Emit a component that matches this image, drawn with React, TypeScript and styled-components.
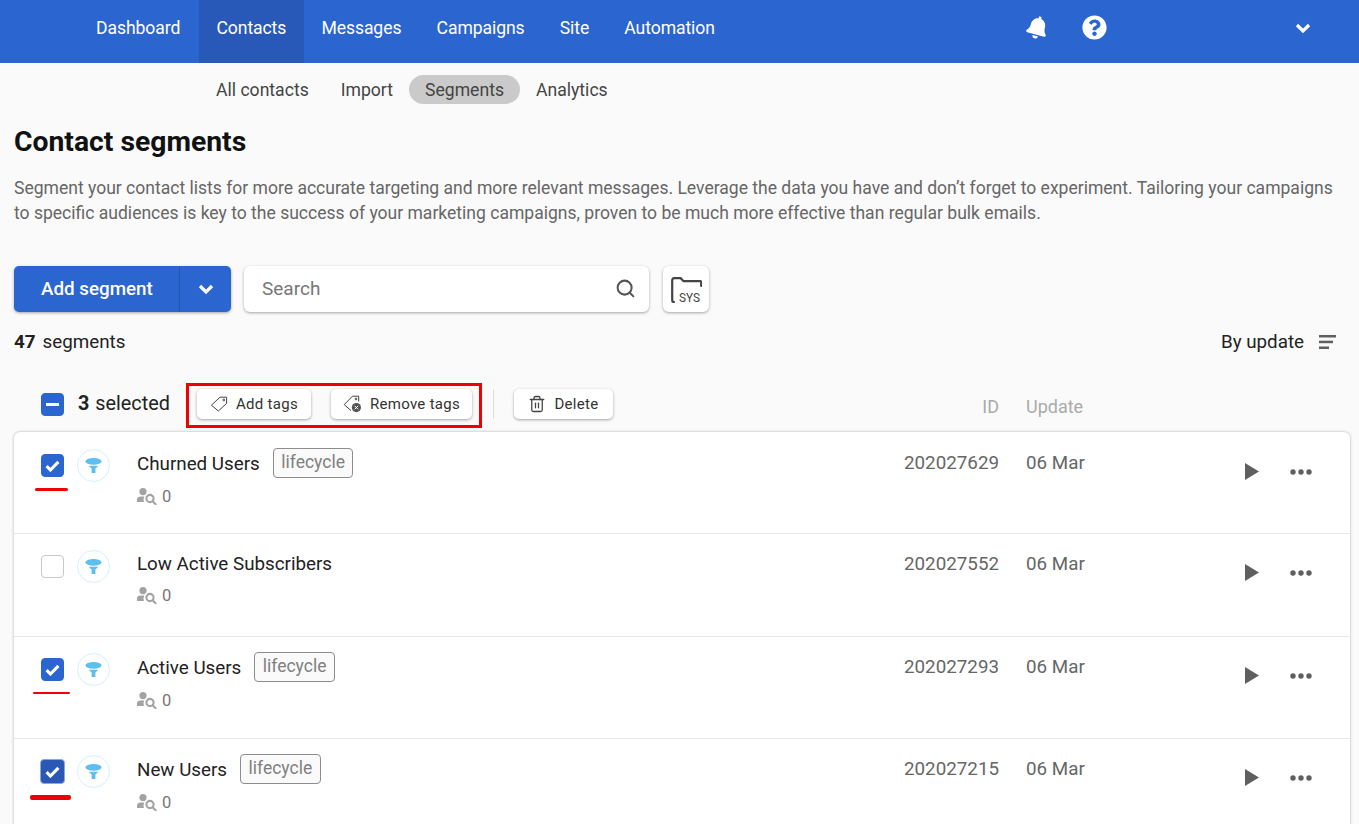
import React from 'react';
import styled, { createGlobalStyle } from 'styled-components';
import { FaBell, FaQuestionCircle } from 'react-icons/fa';
import { Search as SearchIcon, Trash2 } from 'lucide-react';

const GlobalStyle = createGlobalStyle`
  html, body {
    margin: 0;
    height: 100%;
    overflow: hidden;
    background: #fafafa;
    font-family: Roboto, "Liberation Sans", sans-serif;
  }
  * { box-sizing: border-box; }
`;

const TopNav = styled.nav`
  height: 63px;
  background: #2b65cf;
  display: flex;
  align-items: stretch;
  padding-left: 78.5px;
`;

const NavItem = styled.a<{ $active?: boolean }>`
  display: flex;
  align-items: center;
  padding: 0 17.6px 8px;
  height: 63px;
  color: #fff;
  font-size: 17.6px;
  letter-spacing: -0.1px;
  background: ${(p) => (p.$active ? '#2959b8' : 'transparent')};

  &:first-child {
    margin-right: 1px;
  }
`;

const NavIcons = styled.div`
  display: flex;
  align-items: center;
  padding-bottom: 8px;
  color: #fff;
  margin-left: 294px;
  gap: 33px;
`;

const BellIcon = styled(FaBell)`
  font-size: 23px;
  transform: rotate(15deg);
`;

const NavChevron = styled.div`
  display: flex;
  align-items: center;
  padding-bottom: 7px;
  margin-left: 188px;
`;

const SubNav = styled.div`
  display: flex;
  align-items: center;
  margin-top: 12px;
  padding-left: 200px;
  height: 29px;
`;

const SubItem = styled.a<{ $active?: boolean }>`
  padding: 0 16px;
  height: 29px;
  line-height: 31px;
  border-radius: 15px;
  font-size: 17.6px;
  color: #444;
  background: ${(p) => (p.$active ? '#cacaca' : 'transparent')};
`;

const Page = styled.main`
  padding: 0 9px 0 14px;
`;

const Title = styled.h1`
  margin: 22px 0 0;
  font-size: 28.3px;
  line-height: 32px;
  font-weight: 700;
  color: #111;
`;

const Description = styled.p`
  margin: 18px 0 0;
  font-size: 17.55px;
  line-height: 25px;
  color: #666;
  width: 1330px;
`;

const Toolbar = styled.div`
  display: flex;
  margin-top: 40px;
  height: 46px;
`;

const AddButton = styled.div`
  width: 217px;
  height: 46px;
  display: flex;
  border-radius: 5px;
  background: #2b65cf;
  color: #fff;
  box-shadow: 0 1px 3px rgba(0, 0, 0, 0.35);
`;

const AddLabel = styled.span`
  width: 166px;
  padding-left: 27px;
  line-height: 46px;
  font-size: 18.8px;
  font-weight: 500;
  border-right: 1px solid #2455ad;
`;

const AddCaret = styled.span`
  flex: 1;
  display: flex;
  align-items: center;
  justify-content: center;
`;

const SearchBox = styled.div`
  width: 405px;
  height: 46px;
  margin-left: 13px;
  display: flex;
  align-items: center;
  justify-content: space-between;
  padding: 0 13px 2px 18px;
  background: #fff;
  border-radius: 6px;
  box-shadow: 0 1px 3px rgba(0, 0, 0, 0.35);
  font-size: 19px;
  color: #777;
`;

const FolderButton = styled.div`
  width: 46px;
  height: 46px;
  margin-left: 14px;
  padding-top: 3px;
  display: flex;
  align-items: center;
  justify-content: center;
  background: #fff;
  border-radius: 6px;
  box-shadow: 0 1px 3px rgba(0, 0, 0, 0.35);
`;

const CountRow = styled.div`
  display: flex;
  align-items: center;
  justify-content: space-between;
  margin-top: 18px;
  height: 24px;
  padding-right: 14px;
  font-size: 18.8px;
  color: #222;
`;

const Count = styled.b`
  font-weight: 700;
  margin-right: 7px;
`;

const SortLabel = styled.div`
  display: flex;
  align-items: center;
  gap: 15px;
`;

const BulkBar = styled.div`
  display: flex;
  align-items: center;
  margin-top: 29px;
  height: 45px;
  padding-left: 27px;
`;

const SelectedText = styled.span`
  margin-left: 14px;
  width: 108px;
  font-size: 19.8px;
  color: #222;
  padding-bottom: 5px;
  b { font-weight: 700; margin-right: 6px; }
`;

const Marked = styled.div`
  display: flex;
  align-items: center;
  gap: 20px;
  height: 45px;
  padding: 0 7px 3px 8px;
  border: 3px solid #f00000;
`;

const BulkButton = styled.button<{ $w: number }>`
  display: flex;
  align-items: center;
  justify-content: center;
  gap: 8px;
  height: 30px;
  width: ${(p) => p.$w}px;
  padding: 0;
  border: 0;
  border-radius: 5px;
  background: #fff;
  box-shadow: 0 1px 3px rgba(0, 0, 0, 0.35);
  font-family: inherit;
  font-size: 15px;
  letter-spacing: 0.3px;
  color: #333;
`;

const BulkDivider = styled.span`
  width: 1px;
  height: 30px;
  margin: 0 20px 3px 11px;
  background: #ddd;
`;

const DeleteWrap = styled.div`
  padding-bottom: 3px;
`;

const HeadColumns = styled.div`
  display: flex;
  margin-left: auto;
  font-size: 18px;
  color: #aaa;
  padding-top: 2px;
`;

const HeadUpdate = styled.span`
  width: 324px;
  margin-left: 27px;
`;

const Card = styled.section`
  margin-top: 4px;
  padding-top: 1px;
  background: #fff;
  border-radius: 6px 6px 0 0;
  box-shadow: 0 0 3px rgba(0, 0, 0, 0.3);
`;

const Row = styled.div<{ $h: number }>`
  height: ${(p) => p.$h}px;
  display: flex;
  align-items: flex-start;
  padding: 15px 38px 0 27px;
  border-bottom: 1px solid #e6e6e6;
`;

const CheckCell = styled.div`
  position: relative;
  width: 23px;
  height: 33px;
  margin-top: 1px;
  display: flex;
  align-items: center;
  justify-content: center;
  flex: none;
`;

const Box = styled.span<{ $on?: boolean; $hover?: boolean }>`
  flex: none;
  width: ${(p) => (p.$hover ? 25 : 23)}px;
  height: ${(p) => (p.$hover ? 25 : 23)}px;
  border-radius: 4px;
  display: flex;
  align-items: center;
  justify-content: center;
  background: ${(p) => (p.$hover ? '#2a58b4' : p.$on ? '#2b65cf' : '#fff')};
  border: 1px solid ${(p) => (p.$hover ? '#8aa8e4' : p.$on ? '#2b65cf' : '#c9c9c9')};
`;

const BulkBox = styled(Box)`
  margin-bottom: 3px;
`;

const RedLine = styled.span<{ $left: number; $w: number; $h: number; $top: number }>`
  position: absolute;
  left: ${(p) => p.$left}px;
  top: ${(p) => p.$top}px;
  width: ${(p) => p.$w}px;
  height: ${(p) => p.$h}px;
  border-radius: 2px;
  background: #f00000;
`;

const FunnelCircle = styled.div`
  flex: none;
  width: 33px;
  height: 33px;
  margin: 1px 0 0 13px;
  border-radius: 50%;
  border: 1px solid #d4f0fd;
  background: #fff;
  display: flex;
  align-items: center;
  justify-content: center;
`;

const Main = styled.div`
  flex: 1;
  margin-left: 27px;
`;

const NameLine = styled.div`
  display: flex;
  align-items: center;
  gap: 13px;
  min-height: 28px;
`;

const Name = styled.span`
  font-size: 18.8px;
  color: #222;
  padding-top: 2px;
`;

const TagChip = styled.span`
  height: 30px;
  padding: 0 7.5px;
  line-height: 26px;
  border: 1px solid #8d8d8d;
  border-radius: 4px;
  background: #fafafa;
  font-size: 17.5px;
  color: #808080;
`;

const Audience = styled.div`
  display: flex;
  align-items: center;
  gap: 5px;
  margin-top: 7px;
  height: 22px;
  font-size: 16.5px;
  color: #777;
`;

const IdCell = styled.div`
  font-size: 18.8px;
  color: #666;
  padding-top: 4px;
`;

const DateCell = styled.div`
  width: 219px;
  margin-left: 27px;
  font-size: 18.8px;
  color: #666;
  padding-top: 4px;
`;

const Actions = styled.div`
  display: flex;
  align-items: center;
  gap: 31px;
  height: 44px;
  margin-top: 1px;
`;

const DotsWrap = styled.span`
  display: flex;
  margin-top: 2px;
`;

const Chevron = () => (
  <svg width="16" height="11" viewBox="0 0 16 11">
    <path d="M2 2l6 6 6-6" fill="none" stroke="#fff" strokeWidth="3.2" />
  </svg>
);

const Funnel = () => (
  <svg width="17" height="15" viewBox="0 0 17 15">
    <ellipse cx="8.5" cy="3.4" rx="8" ry="3.3" fill="#5bc0f0" />
    <path d="M3.6 7.8h9.8l-3 2.6V15H6.6v-4.6z" fill="#5bc0f0" />
  </svg>
);

const UserSearch = () => (
  <svg width="20" height="17" viewBox="0 0 20 17" fill="#a3a3a3">
    <circle cx="6" cy="3.6" r="3.6" />
    <path d="M0 14v-2.6C0 9.6 1.6 8.4 3.6 8.4h3.8a6 6 0 0 0-.5 5.6z" />
    <circle cx="13" cy="10.5" r="3.6" fill="none" stroke="#a3a3a3" strokeWidth="2.1" />
    <path d="M15.6 13.2l3 3" stroke="#a3a3a3" strokeWidth="2.1" strokeLinecap="round" />
  </svg>
);

const TagOutline = () => (
  <svg width="18" height="16" viewBox="0 0 18 16" fill="none" stroke="#444" strokeWidth="1">
    <path d="M10 1.2h6.6v6.2L8.4 15 1.4 9.2z" strokeLinejoin="round" />
    <circle cx="13.8" cy="4" r="0.9" />
  </svg>
);

const TagRemove = () => (
  <svg width="19" height="18" viewBox="0 0 19 18" fill="none" stroke="#444" strokeWidth="1">
    <path d="M9.5 1.2h6.2v5.4M8 15.6L1.2 9.6 9.5 1.2" strokeLinejoin="round" />
    <circle cx="13" cy="4" r="0.9" />
    <circle cx="13.4" cy="12.6" r="4.6" fill="#555" stroke="none" />
    <path d="M11.7 10.9l3.4 3.4M15.1 10.9l-3.4 3.4" stroke="#fff" />
  </svg>
);

const SysFolder = () => (
  <svg width="31" height="28" viewBox="0 0 31 28">
    <path
      d="M3 25C1.8 25 1.2 24.1 1.2 22.9V3.4C1.2 2 2 1.2 3.4 1.2h6.2l3 3H29.2c.6 0 1 .4 1 1V9"
      fill="none"
      stroke="#444"
      strokeWidth="2.2"
      strokeLinecap="round"
    />
    <text x="8" y="25" fontFamily="Roboto, sans-serif" fontSize="13" fill="#444" textLength="21" lengthAdjust="spacingAndGlyphs">
      SYS
    </text>
  </svg>
);

const Check = () => (
  <svg width="15" height="12" viewBox="0 0 15 12">
    <path d="M1.6 6.2l3.8 3.8 8-8.2" fill="none" stroke="#fff" strokeWidth="3.1" />
  </svg>
);

const Minus = () => (
  <svg width="13" height="3" viewBox="0 0 13 3">
    <rect width="13" height="3" fill="#fff" />
  </svg>
);

const SortIcon = () => (
  <svg width="17" height="14" viewBox="0 0 17 14" fill="#5f5f5f">
    <rect width="17" height="2.5" />
    <rect y="5.7" width="14" height="2.5" />
    <rect y="11.5" width="10" height="2.5" />
  </svg>
);

const Play = () => (
  <svg width="14" height="17" viewBox="0 0 14 17">
    <path d="M0 0l14 8.5L0 17z" fill="#5f5f5f" />
  </svg>
);

const Dots = () => (
  <svg width="22" height="6" viewBox="0 0 22 6" fill="#5f5f5f">
    <circle cx="3" cy="3" r="2.7" />
    <circle cx="11" cy="3" r="2.7" />
    <circle cx="19" cy="3" r="2.7" />
  </svg>
);

type Segment = {
  name: string;
  tag?: boolean;
  id: string;
  checked?: boolean;
  hover?: boolean;
  height: number;
  line?: { left: number; top: number; w: number; h: number };
};

const segments: Segment[] = [
  { name: 'Churned Users', tag: true, id: '202027629', checked: true, height: 101, line: { left: -6, top: 39, w: 33, h: 3 } },
  { name: 'Low Active Subscribers', id: '202027552', height: 103 },
  { name: 'Active Users', tag: true, id: '202027293', checked: true, height: 102, line: { left: -8, top: 39, w: 37, h: 2 } },
  { name: 'New Users', tag: true, id: '202027215', checked: true, hover: true, height: 102, line: { left: -11, top: 40, w: 41, h: 5 } },
];

const App: React.FC = () => {
  return (
    <>
      <GlobalStyle />
      <TopNav>
        <NavItem>Dashboard</NavItem>
        <NavItem $active>Contacts</NavItem>
        <NavItem>Messages</NavItem>
        <NavItem>Campaigns</NavItem>
        <NavItem>Site</NavItem>
        <NavItem>Automation</NavItem>
        <NavIcons>
          <BellIcon />
          <FaQuestionCircle size={25} />
        </NavIcons>
        <NavChevron>
          <Chevron />
        </NavChevron>
      </TopNav>

      <SubNav>
        <SubItem>All contacts</SubItem>
        <SubItem>Import</SubItem>
        <SubItem $active>Segments</SubItem>
        <SubItem>Analytics</SubItem>
      </SubNav>

      <Page>
        <Title>Contact segments</Title>
        <Description>
          Segment your contact lists for more accurate targeting and more relevant messages. Leverage the data you have
          and don’t forget to experiment. Tailoring your campaigns to specific audiences is key to the success of your
          marketing campaigns, proven to be much more effective than regular bulk emails.
        </Description>

        <Toolbar>
          <AddButton>
            <AddLabel>Add segment</AddLabel>
            <AddCaret>
              <Chevron />
            </AddCaret>
          </AddButton>
          <SearchBox>
            Search
            <SearchIcon size={21} color="#555" strokeWidth={2.3} />
          </SearchBox>
          <FolderButton>
            <SysFolder />
          </FolderButton>
        </Toolbar>

        <CountRow>
          <span>
            <Count>47</Count>segments
          </span>
          <SortLabel>
            By update
            <SortIcon />
          </SortLabel>
        </CountRow>

        <BulkBar>
          <BulkBox $on>
            <Minus />
          </BulkBox>
          <SelectedText>
            <b>3</b>selected
          </SelectedText>
          <Marked>
            <BulkButton $w={114}>
              <TagOutline />
              Add tags
            </BulkButton>
            <BulkButton $w={141}>
              <TagRemove />
              Remove tags
            </BulkButton>
          </Marked>
          <BulkDivider />
          <DeleteWrap>
            <BulkButton $w={99}>
              <Trash2 size={18} color="#444" strokeWidth={1.7} />
              Delete
            </BulkButton>
          </DeleteWrap>
          <HeadColumns>
            <span>ID</span>
            <HeadUpdate>Update</HeadUpdate>
          </HeadColumns>
        </BulkBar>

        <Card>
          {segments.map((s) => (
            <Row key={s.id} $h={s.height}>
              <CheckCell>
                <Box $on={s.checked} $hover={s.hover}>
                  {s.checked && <Check />}
                </Box>
                {s.line && <RedLine $left={s.line.left} $top={s.line.top} $w={s.line.w} $h={s.line.h} />}
              </CheckCell>
              <FunnelCircle>
                <Funnel />
              </FunnelCircle>
              <Main>
                <NameLine>
                  <Name>{s.name}</Name>
                  {s.tag && <TagChip>lifecycle</TagChip>}
                </NameLine>
                <Audience>
                  <UserSearch />0
                </Audience>
              </Main>
              <IdCell>{s.id}</IdCell>
              <DateCell>06 Mar</DateCell>
              <Actions>
                <Play />
                <DotsWrap>
                  <Dots />
                </DotsWrap>
              </Actions>
            </Row>
          ))}
        </Card>
      </Page>
    </>
  );
};

export default App;
